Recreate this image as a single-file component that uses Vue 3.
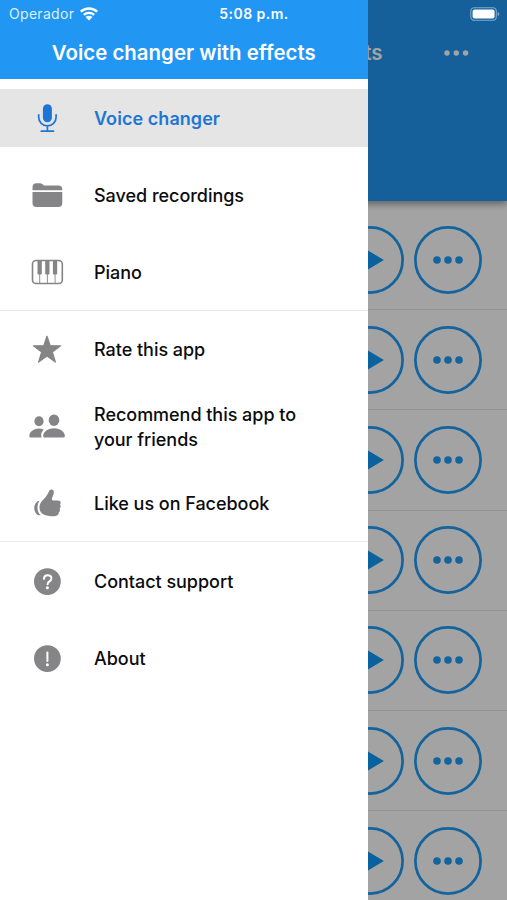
<template>
  <div class="screen">
    <!-- Page behind the drawer -->
    <main class="page">
      <header class="page-header">
        <!-- only the end of the title sticks out past the drawer -->
        <h1 class="page-title">ts</h1>
        <svg class="page-more" width="26" height="8" viewBox="0 0 26 8">
          <circle cx="4" cy="4" r="2.7" />
          <circle cx="13.3" cy="4" r="2.7" />
          <circle cx="22.6" cy="4" r="2.7" />
        </svg>
      </header>
      <ul class="effects">
        <li v-for="n in 7" :key="n" class="effect">
          <button class="round" aria-label="Play">
            <svg width="68" height="68" viewBox="0 0 68 68">
              <circle cx="34" cy="34" r="32.6" class="ring" />
              <path d="M23.6 19.5 47.9 34 23.6 48.5z" />
            </svg>
          </button>
          <button class="round" aria-label="More">
            <svg width="68" height="68" viewBox="0 0 68 68">
              <circle cx="34" cy="34" r="32.6" class="ring" />
              <circle cx="23" cy="34" r="3.8" class="more" />
              <circle cx="34" cy="34" r="3.8" class="more" />
              <circle cx="45" cy="34" r="3.8" class="more" />
            </svg>
          </button>
        </li>
      </ul>
    </main>

    <div class="overlay"></div>

    <aside class="drawer">
      <div class="drawer-header">Voice changer with effects</div>
      <nav>
        <ul v-for="(group, i) in groups" :key="i" class="group">
          <li v-for="item in group" :key="item.icon" class="slot">
            <a class="item" :class="{ active: item.active }">
              <svg class="icon" width="40" height="40" viewBox="0 0 40 40">
                <g v-if="item.icon === 'mic'">
                  <rect x="15.9" y="6.3" width="9" height="18" rx="4.5" />
                  <path class="line" d="M11.7 16.8v2.4a8.7 8.7 0 0 0 17.4 0v-2.4M20.4 28v5M14.3 33.2h12.2" />
                </g>
                <g v-else-if="item.icon === 'folder'">
                  <path d="M5.5 15.2v-3q0-3.9 3.9-3.9h3.5q1.6 0 2.6.9l.9.8q.7.6 1.8.6h13.2q3.9 0 3.9 3.9v.7z" />
                  <path d="M5.5 17h29.8v11q0 4-4 4H9.5q-4 0-4-4z" />
                </g>
                <g v-else-if="item.icon === 'piano'">
                  <rect x="5.5" y="8.5" width="29.8" height="23" rx="3.5" class="frame" />
                  <path d="M10.5 8.5h4.3v13q0 1-1 1h-2.3q-1 0-1-1zM18.2 8.5h4.3v13q0 1-1 1h-2.3q-1 0-1-1zM25.9 8.5h4.3v13q0 1-1 1h-2.3q-1 0-1-1z" />
                  <path class="hair" d="M12.7 22v9M20.4 22v9M28.1 22v9" />
                </g>
                <g v-else-if="item.icon === 'star'">
                  <path class="soft" d="M20 7.2 23.2 16.8H33.6L25.3 23 28.4 33.1 20 27.1 11.6 33.1 14.7 23 6.4 16.8H16.8z" />
                </g>
                <g v-else-if="item.icon === 'friends'">
                  <ellipse cx="12" cy="15.2" rx="4.6" ry="5" />
                  <ellipse cx="27" cy="14.2" rx="5.3" ry="5.8" />
                  <path d="M16.7 23.8Q14.5 22.5 11.8 22.5C6 22.5 2.3 26.5 2.3 30q0 1.6 1.4 1.6h11c-1.3-2.8-.3-5.8 2-7.8z" />
                  <path d="M27 22.3c6.8 0 10.9 4.3 10.9 7.8q0 1.5-1.7 1.5H17.8q-1.7 0-1.7-1.5c0-3.5 4.1-7.8 10.9-7.8z" />
                </g>
                <g v-else-if="item.icon === 'like'">
                  <path d="M12.3 17.9H11c-2 1.2-3.8 3.7-3.8 7s1.8 6.4 4.1 7.400h2.4c-2.2-1.8-3.2-4.5-3.2-7.5 0-2.7.6-5 1.8-6.9z" />
                  <path d="M24.4 6.6c1.9 0 2.6 1.5 2.4 3-.2 1.9-1.3 4.1-1.8 6-.3 1.2.1 1.8 1.3 1.8h4.5c2.9 0 3.6 2.4 2.3 4 .9 1.5.6 3.2-.4 4.2.6 1.6.1 3.1-1 3.8.2 2-.9 3.4-3.2 3.7-2.5.3-6.4.3-8.6-.5-4.5-1-7.4-3.6-7.4-8.1 0-4.3 2.5-6.4 5.1-9.2 2-2.2 3.1-4.3 4.2-6.6.6-1.4 1.3-2.1 2.6-2.1z" />
                </g>
                <g v-else>
                  <circle cx="20.4" cy="20.6" r="13.4" />
                  <path v-if="item.icon === 'help'" class="cut" d="M16.9 17.8c.2-2.3 1.7-3.5 3.7-3.5s3.8 1.2 3.8 3.2c0 2.9-3.8 2.9-3.8 5.7" />
                  <path v-else class="cut" d="M20.4 14.5v8.6" />
                  <circle cx="20.4" cy="26.8" r="1.5" class="dot" />
                </g>
              </svg>
              <span class="label">{{ item.label }}</span>
            </a>
          </li>
        </ul>
      </nav>
    </aside>

    <!-- Status bar stays above the drawer and the overlay -->
    <div class="status">
      <div class="carrier">
        <span>Operador</span>
        <svg width="20" height="16" viewBox="0 0 20 16">
          <path d="M1.8 5.7a12 12 0 0 1 16.4 0M4.8 8.9a7.6 7.6 0 0 1 10.4 0" />
          <path class="wedge" d="M6.5 11.1a5 5 0 0 1 7 0L10 14.6z" />
        </svg>
      </div>
      <div class="clock">5:08 p.m.</div>
      <div class="battery">
        <svg width="30" height="14" viewBox="0 0 30 14">
          <rect x=".8" y=".7" width="25.5" height="12.6" rx="3.5" class="shell" />
          <rect x="2.6" y="2.4" width="22" height="9.2" rx="2" />
          <path d="M27.7 4.7q1.7.7 1.7 2.3t-1.7 2.3z" class="cap" />
        </svg>
      </div>
    </div>
  </div>
</template>

<script setup>
const groups = [
  [
    { icon: "mic", label: "Voice changer", active: true },
    { icon: "folder", label: "Saved recordings" },
    { icon: "piano", label: "Piano" },
  ],
  [
    { icon: "star", label: "Rate this app" },
    { icon: "friends", label: "Recommend this app to your friends" },
    { icon: "like", label: "Like us on Facebook" },
  ],
  [
    { icon: "help", label: "Contact support" },
    { icon: "about", label: "About" },
  ],
];
</script>

<style>
body {
  margin: 0;
  overflow: hidden;
}
</style>

<style scoped>
.screen {
  position: relative;
  width: 507px;
  height: 900px;
  overflow: hidden;
  background: #fff;
  font-family: Inter, "Liberation Sans", sans-serif;
}

ul {
  list-style: none;
  margin: 0;
  padding: 0;
}

.page-header {
  position: relative;
  display: flex;
  align-items: flex-start;
  justify-content: flex-end;
  gap: 60px;
  box-sizing: border-box;
  height: 201.4px;
  padding: 40px 38.4px 0 0;
  background: #2196f3;
  box-shadow: 0 3px 7px rgba(0, 0, 0, 0.4);
}

.page-title {
  margin: 0;
  color: #fff;
  font-size: 20.5px;
  font-weight: 600;
  line-height: 26px;
}

.page-more {
  margin-top: 9px;
  fill: #fff;
}

.effects {
  padding-top: 8.6px;
}

.effect {
  display: flex;
  justify-content: flex-end;
  align-items: center;
  gap: 10.1px;
  box-sizing: border-box;
  height: 100.2px;
  padding-right: 24.7px;
  border-bottom: 1px solid #e4e4e4;
}

.round {
  width: 68px;
  height: 68px;
  padding: 0;
  border: 0;
  background: none;
}

.round svg {
  display: block;
  fill: #0f9af8;
}

.round .ring {
  fill: none;
  stroke: #1f9bf6;
  stroke-width: 2.7;
}

.round .more {
  fill: #1f9bf6;
}

.overlay {
  position: absolute;
  inset: 0;
  background: rgba(0, 0, 0, 0.36);
}

.drawer {
  position: absolute;
  top: 0;
  left: 0;
  width: 367.5px;
  height: 100%;
  background: #fff;
}

.drawer-header {
  box-sizing: border-box;
  height: 79.4px;
  padding-top: 40px;
  background: #2196f3;
  color: #fff;
  font-size: 20.4px;
  font-weight: 600;
  line-height: 26px;
  letter-spacing: 0.03px;
  text-align: center;
}

.group + .group {
  margin-top: -0.7px;
  border-top: 1px solid #e9e9e9;
}

.slot {
  display: flex;
  align-items: center;
  height: 77px;
}

.item {
  display: flex;
  align-items: center;
  flex: 1;
  height: 58px;
  padding: 0 40px 0 27px;
  color: #0c0c0e;
}

.icon {
  flex: none;
  margin-right: 27px;
  fill: #858588;
}

.label {
  padding-top: 1.4px;
  font-size: 18px;
  font-weight: 500;
  line-height: 25px;
  letter-spacing: -0.03px;
}

.active {
  background: #e5e5e5;
  color: #1e76d4;
}

.active .icon {
  fill: #1e76d4;
}

.active .label {
  font-weight: 600;
  letter-spacing: 0.06px;
}

.line {
  fill: none;
  stroke: #1e76d4;
  stroke-width: 1.7;
  stroke-linecap: round;
}

.frame {
  fill: none;
  stroke: #858588;
  stroke-width: 1.6;
}

.hair {
  stroke: #858588;
  stroke-width: 0.9;
}

.soft {
  stroke: #858588;
  stroke-width: 1.2;
  stroke-linejoin: round;
}

.cut {
  fill: none;
  stroke: #fff;
  stroke-width: 2;
  stroke-linecap: round;
}

.dot {
  fill: #fff;
}

.status {
  position: absolute;
  top: 0;
  left: 0;
  display: grid;
  grid-template-columns: 1fr auto 1fr;
  align-items: center;
  box-sizing: border-box;
  width: 100%;
  height: 27px;
  padding: 0 7px 0 9px;
  color: #fff;
  font-size: 14px;
}

.carrier {
  display: flex;
  align-items: center;
  gap: 4.5px;
  color: #dcf0ff;
  letter-spacing: 0.3px;
}

.carrier svg {
  fill: none;
  stroke: #fff;
  stroke-width: 2.4;
}

.carrier .wedge {
  fill: #fff;
  stroke: none;
}

.clock {
  margin-right: 1px;
  font-weight: 600;
  letter-spacing: 0.45px;
}

.battery {
  display: flex;
  justify-content: flex-end;
}

.battery svg {
  fill: #fff;
}

.battery .shell {
  fill: none;
  stroke: #7fa9cc;
  stroke-width: 1.1;
}

.battery .cap {
  fill: #7fa9cc;
}
</style>
